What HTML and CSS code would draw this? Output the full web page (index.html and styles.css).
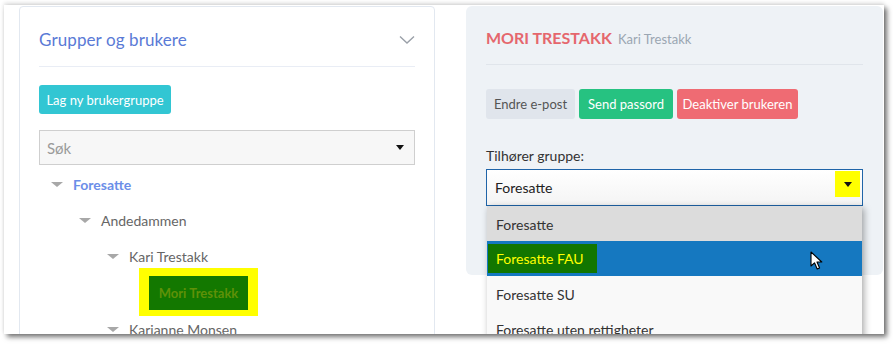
FILE: index.html
```html
<!DOCTYPE html>
<html lang="no">
<head>
<meta charset="utf-8">
<title>Grupper og brukere</title>
<link rel="stylesheet" href="styles.css">
</head>
<body>
<div class="window">
  <section class="card">
    <header class="card-head">
      <h2 class="card-title">Grupper og brukere</h2>
      <svg class="chev" width="16" height="10" viewBox="0 0 16 10"><path d="M1 1.5 L8 8 L15 1.5" fill="none" stroke="#9aa0a8" stroke-width="1.4"/></svg>
    </header>
    <div class="card-body">
      <button class="btn btn-teal">Lag ny brukergruppe</button>
      <div class="search">
        <span class="search-ph">Søk</span>
        <span class="caret-dark"></span>
      </div>
      <ul class="tree">
        <li class="node lvl0"><span class="tri"></span><span class="group">Foresatte</span></li>
        <li class="node lvl1"><span class="tri"></span><span>Andedammen</span></li>
        <li class="node lvl2"><span class="tri"></span><span>Kari Trestakk</span></li>
        <li class="node lvl3"><span class="mark"><span class="mark-inner">Mori Trestakk</span></span></li>
        <li class="node lvl2"><span class="tri"></span><span>Karianne Monsen</span></li>
      </ul>
    </div>
  </section>
  <section class="panel">
    <header class="panel-head">
      <span class="user-name">MORI TRESTAKK</span>
      <span class="user-parent">Kari Trestakk</span>
    </header>
    <div class="actions">
      <button class="btn btn-gray">Endre e-post</button>
      <button class="btn btn-green">Send passord</button>
      <button class="btn btn-red">Deaktiver brukeren</button>
    </div>
    <label class="field-label">Tilhører gruppe:</label>
    <div class="select-wrap">
      <div class="select">
        <span>Foresatte</span>
        <span class="sel-btn"><span class="caret-dark"></span></span>
      </div>
      <ul class="dropdown">
        <li class="opt opt-hover">Foresatte</li>
        <li class="opt opt-active"><span class="opt-mark">Foresatte FAU</span></li>
        <li class="opt">Foresatte SU</li>
        <li class="opt">Foresatte uten rettigheter</li>
      </ul>
      <svg class="cursor" width="14" height="20" viewBox="0 0 14 20"><path d="M1 1 L1 15 L4.5 11.8 L7.2 18 L9.6 17 L7 11 L11.8 11 Z" fill="#fff" stroke="#000" stroke-width="1.1" stroke-linejoin="round"/></svg>
    </div>
  </section>
</div>
</body>
</html>
```

FILE: styles.css
```css
* { box-sizing: border-box; }
html, body { margin: 0; padding: 0; background: #ffffff; }
body { font-family: "Lato", "Open Sans", sans-serif; color: #333; width: 893px; height: 344px; overflow: hidden; padding: 5px 0 0 4px; }

.window {
  width: 880px;
  height: 329px;
  background: #fff;
  overflow: hidden;
  display: flex;
  align-items: flex-start;
  padding: 1px 2px 0 15px;
  gap: 31px;
  box-shadow: 3px 3px 5px rgba(0,0,0,0.55), 0 -2px 4px rgba(0,0,0,0.12);
}

.card {
  width: 416px;
  flex: none;
  height: 360px;
  border: 1px solid #e2e8f0;
  border-radius: 4px;
  padding: 0 19px;
}
.card-head {
  display: flex;
  align-items: center;
  justify-content: space-between;
  height: 60px;
  padding-top: 6px;
  border-bottom: 1px solid #e9edf5;
}
.card-title { margin: 0; font-size: 17px; font-weight: 400; color: #5a7ad6; letter-spacing: 0.1px; }

.card-body { padding-top: 18px; }
.btn {
  display: block;
  border: 0;
  font-family: inherit;
  font-size: 13px;
  border-radius: 3px;
  padding: 0;
  white-space: nowrap;
  text-align: center;
  cursor: pointer;
}
.btn-teal { background: #32c6d3; color: #fff; height: 29px; width: 132px; }

.search {
  margin-top: 16px;
  height: 35px;
  border: 1px solid #cfcfcf;
  background: #f7f7f7;
  display: flex;
  align-items: center;
  justify-content: space-between;
  padding: 0 10px 0 7px;
}
.search-ph { color: #9a9a9a; font-size: 15px; }
.caret-dark {
  width: 0; height: 0;
  border-left: 4px solid transparent;
  border-right: 4px solid transparent;
  border-top: 5px solid #111;
}

.tree { list-style: none; margin: 0; padding: 0; font-size: 14px; color: #666; }
.node { display: flex; align-items: center; height: 36px; }
.tree .node:first-child { margin-top: 1px; }
.lvl0 { padding-left: 12px; }
.lvl1 { padding-left: 40px; }
.lvl2 { padding-left: 68px; }
.lvl3 { padding-left: 100px; height: 48px; margin-top: -6px; }
.tri {
  width: 0; height: 0;
  border-left: 6px solid transparent;
  border-right: 6px solid transparent;
  border-top: 5px solid #a8a8a8;
  margin-right: 10px;
}
.group { color: #6b8ee8; font-weight: 700; }
.mark {
  background: #ffff00;
  padding: 8px 10px 6px 10px;
  display: block;
}
.mark-inner {
  display: flex;
  align-items: center;
  justify-content: center;
  background: #137800;
  width: 99px;
  height: 34px;
  color: #5f9108;
  font-weight: 700;
  font-size: 13px;
}
.node.lvl3 + .node { margin-top: -5px; }

.panel {
  width: 417px;
  flex: none;
  height: 269px;
  background: #eef2f6;
  border-radius: 6px;
  padding: 0 20px;
}
.panel-head {
  height: 59px;
  padding-top: 22px;
  border-bottom: 1px solid #e0e5eb;
}
.user-name { color: #e5676d; font-weight: 700; font-size: 16px; }
.user-parent { color: #9aa6b2; font-size: 13px; margin-left: 2px; }

.actions { display: flex; gap: 4px; margin-top: 24px; }
.actions .btn { height: 30px; }
.btn-gray { background: #e0e5ec; color: #555; width: 89px; }
.btn-green { background: #26c281; color: #fff; width: 94px; }
.btn-red { background: #ef6b73; color: #fff; width: 121px; }

.field-label { display: block; margin-top: 28px; font-size: 14px; color: #333; }

.select-wrap { position: relative; margin-top: 5px; }
.select {
  height: 37px;
  border: 1px solid #1f64a8;
  background: linear-gradient(#ffffff, #f4f4f4);
  display: flex;
  align-items: center;
  justify-content: space-between;
  padding: 0 2px 0 8px;
  font-size: 14px;
  color: #222;
}
.sel-btn {
  width: 25px; height: 26px;
  background: #ffff00;
  display: flex; align-items: center; justify-content: center;
  margin-bottom: 7px;
}
.dropdown {
  position: absolute;
  left: 1px; top: 37px;
  width: 375px;
  margin: 0; padding: 0;
  list-style: none;
  background: #f9f9f9;
  box-shadow: 2px 2px 7px rgba(0,0,0,0.35);
  font-size: 14px;
  color: #333;
}
.opt { height: 35px; display: flex; align-items: center; padding-left: 9px; padding-top: 1px; }
.opt-hover { background: #dcdcdc; }
.opt-active { background: #1578c0; padding-left: 1px; padding-top: 0; }
.opt-mark {
  background: #127600;
  color: #ffff00;
  height: 29px;
  width: 109px;
  display: flex; align-items: center;
  padding-left: 8px;
}
.cursor { position: absolute; left: 324px; top: 82px; }
```
